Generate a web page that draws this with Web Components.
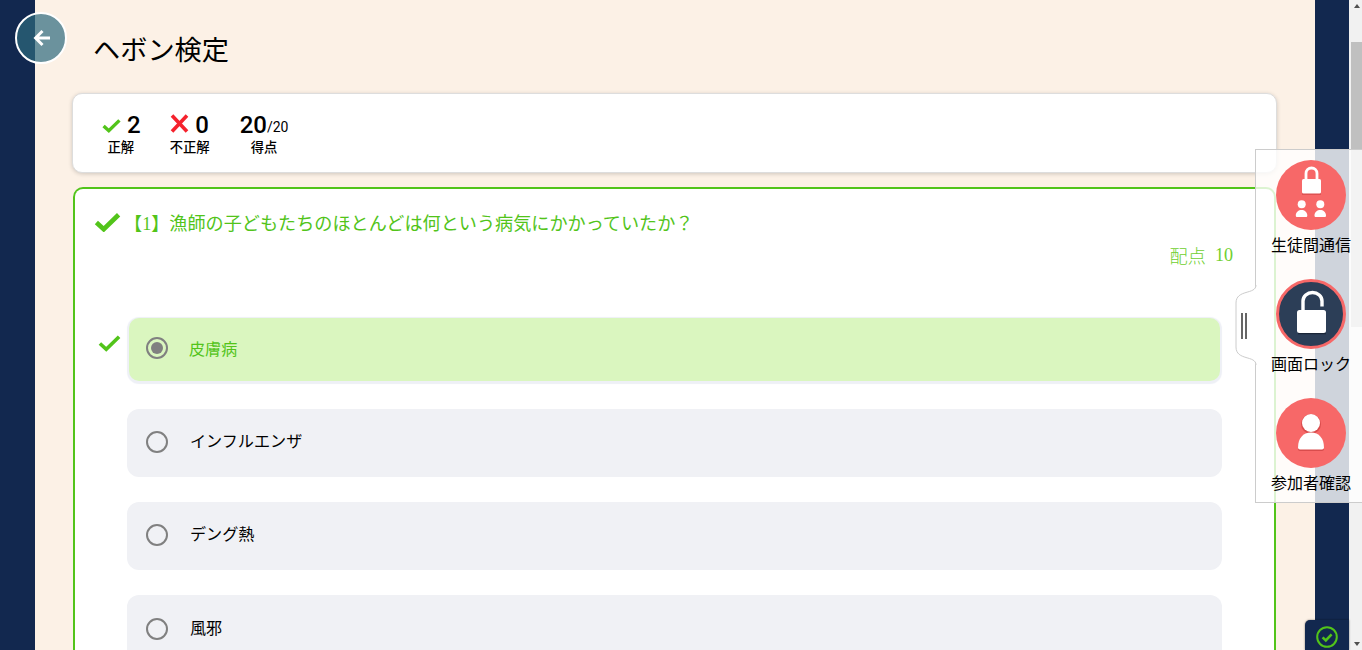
<!DOCTYPE html>
<html lang="ja"><head><meta charset="utf-8"><title>ヘボン検定</title>
<style>
html,body{margin:0;height:100%;overflow:hidden;background:#12284f;font-family:"Noto Sans CJK JP","Noto Sans",sans-serif}
</style></head><body>
<quiz-page>
  <back-button slot="over"></back-button>
  <page-title>ヘボン検定</page-title>
  <stats-card>
    <stat-item kind="ok" value="2" label="正解"></stat-item>
    <stat-item kind="ng" value="0" label="不正解"></stat-item>
    <stat-item value="20" total="/20" label="得点"></stat-item>
  </stats-card>
  <question-card heading="【1】漁師の子どもたちのほとんどは何という病気にかかっていたか？" score="配点" points="10">
    <quiz-option selected>皮膚病</quiz-option>
    <quiz-option>インフルエンザ</quiz-option>
    <quiz-option>デング熱</quiz-option>
    <quiz-option>風邪</quiz-option>
  </question-card>
  <fake-scrollbar slot="scroll"></fake-scrollbar>
  <status-badge slot="over"></status-badge>
  <side-panel slot="over">
    <side-button label="生徒間通信" icon="group"></side-button>
    <side-button label="画面ロック" icon="open" dark></side-button>
    <side-button label="参加者確認" icon="person"></side-button>
  </side-panel>
</quiz-page>
<script>
const GREEN='#52c41a';
const CHECK=(w,h,sw)=>`<svg width="${w}" height="${h}" viewBox="0 0 24 18" fill="none" stroke="${GREEN}" stroke-width="${sw}"><path d="M2 9.500 8.600 15.500 22 2.500"/></svg>`;
function def(name,css,html){
  customElements.define(name,class extends HTMLElement{
    connectedCallback(){
      if(this.shadowRoot)return;
      const r=this.attachShadow({mode:'open'});
      r.innerHTML=`<style>${css}</style>`+(typeof html==='function'?html(this):html);
    }
  });
}
def('quiz-page',`
:host{display:flex;height:650px;width:1362px;position:relative;overflow:hidden;background:#12284f}
.left{flex:0 0 35px}
main{flex:0 0 1280px;box-sizing:border-box;background:#fcf1e6;padding:0 38px 0 37px;overflow:hidden;height:650px}
.right{flex:0 0 34px}
`,`<div class="left"></div><main><slot></slot></main><div class="right"></div><slot name="scroll"></slot><slot name="over"></slot>`);
def('back-button',`
:host{position:absolute;left:15px;top:12px;width:52px;height:52px;box-sizing:border-box;border:2px solid #fff;border-radius:50%;background:rgba(45,106,125,.7);display:flex;align-items:center;justify-content:center}
svg{display:block;margin-left:1px}
`,`<svg width="18" height="18" viewBox="0 0 18 18" fill="none" stroke="#fff" stroke-width="3"><path d="M9.500 2 2.600 9l6.900 7M3 9h14"/></svg>`);
def('page-title',`
:host{display:block;padding:28px 0 25px 21px;font-size:27.2px;line-height:40px;color:#000;font-weight:400}
`,`<slot></slot>`);
def('stats-card',`
:host{display:flex;gap:30px;box-sizing:border-box;height:80px;background:#fff;border:1px solid #ddd;border-radius:10px;box-shadow:0 1px 4px rgba(0,0,0,.18);padding:14px 0 0 29px;margin-bottom:14px}
::slotted(stat-item:last-child){margin-left:1px}
`,`<slot></slot>`);
def('stat-item',`
:host{display:flex;flex-direction:column;align-items:center;color:#000}
.top{display:flex;align-items:center;gap:6px;height:34px;margin-bottom:-4px;font:500 24px/34px Roboto,sans-serif;margin-left:-1px}
small{font-size:14px;font-weight:400;align-self:flex-end;line-height:30px}
.n{display:flex}
.l{font-size:13.33px;line-height:18px;font-weight:500;font-family:"Noto Sans CJK JP",sans-serif;margin-left:-1px}
svg{display:block}
.ok{margin-left:1px}
`,h=>{
  const k=h.getAttribute('kind'),t=h.getAttribute('total');
  const ic=k==='ok'?`<span class="ok">${CHECK(19,15,4.300)}</span>`:k==='ng'?`<svg width="19" height="19" viewBox="0 0 19 19" stroke="#f5222d" stroke-width="3.600" fill="none" style="margin-top:-3px"><path d="M2 1.500 17 17.500M17 1.500 2 17.500"/></svg>`:'';
  return `<div class="top">${ic}<span class="n">${h.getAttribute('value')}${t?`<small>${t}</small>`:''}</span></div><div class="l">${h.getAttribute('label')}</div>`;
});
def('question-card',`
:host{display:block;box-sizing:border-box;margin:0 1px;border:2px solid ${GREEN};border-bottom:0;border-radius:10px 10px 0 0;background:#fff;height:470px;padding:0 52px}
.head{display:flex;align-items:center;gap:3px;margin:0 0 0 -33px;height:38px;padding-top:16px;color:${GREEN};font-size:18.14px;line-height:38px;font-family:"Liberation Serif","Noto Sans CJK JP",sans-serif}
.head svg{flex:none;margin-top:-4px}
.score{display:flex;justify-content:flex-end;font-size:18.14px;line-height:26px;font-weight:300;color:#6fcf30;margin:-1px -11px 50px 0;height:26px}
.score b{font:300 18.14px/26px "Liberation Serif",serif;margin-left:9px}
.list{display:flex;flex-direction:column;gap:25px}
`,h=>`<div class="head">${CHECK(27,20,4.200)}<span>${h.getAttribute('heading')}</span></div><div class="score">${h.getAttribute('score')}<b>${h.getAttribute('points')}</b></div><div class="list"><slot></slot></div>`);
def('quiz-option',`
:host{display:flex;align-items:center;position:relative;box-sizing:border-box;height:68px;background:#f0f1f5;border-radius:12px;padding:0 19px 4px;font-size:16.13px;color:#000}
:host(:last-child){padding-bottom:2px}
:host([selected]){height:63px;margin:0 2px 3px;background:#daf6bf;border-radius:10px;box-shadow:0 1px 1px 2px #eef0f6;padding:0 17px 3px;color:${GREEN}}
.r{flex:none;box-sizing:border-box;width:22px;height:22px;border:2px solid #808080;border-radius:50%;margin:2px 22px 0 0;display:flex;align-items:center;justify-content:center}
:host([selected]) .r{margin:0 21px 0 0}
.t{margin-bottom:2px}
:host([selected]) .t{margin-bottom:0}
i{display:block;width:12px;height:12px;border-radius:50%;background:#808080}
.c{position:absolute;left:-31px;top:15px}
:host(:not([selected])) .c{display:none}
`,h=>`<span class="c">${CHECK(23,18,3.800)}</span><span class="r">${h.hasAttribute('selected')?'<i></i>':''}</span><span class="t"><slot></slot></span>`);
def('fake-scrollbar',`
:host{flex:0 0 13px;display:block;position:relative;background:#f1f1f1;height:650px}
.t{position:absolute;left:2px;right:0;top:42px;height:285px;background:#c0c0c0}
.u,.d{position:absolute;left:5px;width:0;height:0;border-left:3.500px solid transparent;border-right:3.500px solid transparent}
.u{top:4px;border-bottom:4px solid #505050}
.d{bottom:4px;border-top:4px solid #505050}
`,`<div class="u"></div><div class="t"></div><div class="d"></div>`);
def('status-badge',`
:host{position:absolute;left:1305px;top:620px;width:44px;height:30px;background:#12284f;border-radius:5px 0 0 0;box-shadow:0 0 2px rgba(0,0,0,.55);display:flex;align-items:flex-start;justify-content:center;padding-top:6px;box-sizing:border-box}
svg{display:block}
`,`<svg width="22" height="22" viewBox="0 0 22 22" fill="none" stroke="${GREEN}"><circle cx="11" cy="11" r="9.800" stroke-width="2"/><path d="M6.600 11.400 9.800 14.400 15.600 8.400" stroke-width="2.600"/></svg>`);
def('side-panel',`
:host{position:absolute;left:1255px;top:149px;width:107px;height:354px;box-sizing:border-box;background:rgba(255,255,255,.8);border:1px solid #ccc;border-right:0;display:flex;flex-direction:column;align-items:center;padding:10px 0 0 0}
.tab{position:absolute;left:-21px;top:135px;display:block}
.col{display:flex;flex-direction:column;align-items:center;margin-left:4px}
`,`<svg class="tab" width="23" height="80" viewBox="0 0 23 80" fill="none"><path d="M21 0C21 10 1 4 1 18V62C1 76 21 70 21 80" fill="#fff" stroke="#ccc"/><path d="M7 28V54M11 28V54" stroke="#666" stroke-width="2"/></svg><div class="col"><slot></slot></div>`);
const ICONS={
group:`<path d="M26 33.800h19" stroke="#d94c4c" stroke-width="2"/><path d="M30 20v-6.500a5.500 5.500 0 0 1 11 0V20" fill="none" stroke="#fff" stroke-width="2.800"/><rect x="26" y="19" width="19" height="14.500" rx="1.500" fill="#fff"/><circle cx="25.700" cy="44.300" r="4" fill="#fff"/><circle cx="44.300" cy="44.300" r="4" fill="#fff"/><path d="M19.800 55.500c0-7.500 11.500-7.500 11.500 0 0 1-.5 1.500-1.500 1.500h-8.500c-1 0-1.500-.5-1.500-1.500zM38.500 55.500c0-7.500 11.500-7.500 11.500 0 0 1-.5 1.500-1.500 1.500H40c-1 0-1.500-.5-1.500-1.500z" fill="#fff"/>`,
open:`<path d="M27 32v-10a9.500 8.500 0 0 1 19 0v5.500" fill="none" stroke="#fff" stroke-width="3.400"/><path d="M22 54.500h28" stroke="#1a2638" stroke-width="1.500"/><rect x="21" y="31" width="29" height="23" rx="2.500" fill="#fff"/>`,
person:`<circle cx="35" cy="26" r="10" fill="#d94c4c"/><circle cx="35" cy="25" r="9" fill="#fff"/><path d="M22 51c0-9 5-15 13-15s13 6 13 15q0 2-2 2H24q-2 0-2-2z" fill="#d94c4c"/><path d="M22 49.500c0-9 5-15 13-15s13 6 13 15q0 2-2 2H24q-2 0-2-2z" fill="#fff"/>`
};
def('side-button',`
:host{display:flex;flex-direction:column;align-items:center;height:119px;color:#000;font-size:16px}
.c{box-sizing:border-box;width:70px;height:70px;border-radius:50%;background:#f76868;flex:none}
:host([dark]) .c{background:#2c3e57;border:3px solid #f76868}
svg{display:block}
:host([dark]) svg{margin:-3px}
.l{line-height:24px;margin-top:2px;white-space:nowrap}
`,h=>`<div class="c"><svg width="70" height="70" viewBox="0 0 70 70">${ICONS[h.getAttribute('icon')]}</svg></div><div class="l">${h.getAttribute('label')}</div>`);
</script>
</body></html>
